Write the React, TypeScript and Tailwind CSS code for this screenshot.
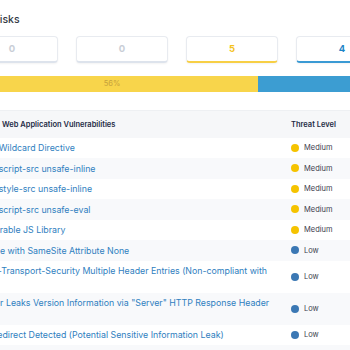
import type { ReactNode } from "react";

type Threat = "Medium" | "Low";

const alerts: { name: string; level: Threat }[] = [
  { name: "CSP: Wildcard Directive", level: "Medium" },
  { name: "CSP: script-src unsafe-inline", level: "Medium" },
  { name: "CSP: style-src unsafe-inline", level: "Medium" },
  { name: "CSP: script-src unsafe-eval", level: "Medium" },
  { name: "Vulnerable JS Library", level: "Medium" },
  { name: "Cookie with SameSite Attribute None", level: "Low" },
  { name: "Strict-Transport-Security Multiple Header Entries (Non-compliant with Spec)", level: "Low" },
  { name: 'Server Leaks Version Information via "Server" HTTP Response Header Field', level: "Low" },
  { name: "Big Redirect Detected (Potential Sensitive Information Leak)", level: "Low" },
  { name: "Information Disclosure - Suspicious Comments", level: "Low" },
];

const counts = [
  { value: 0, text: "text-[#c9ced6]", edge: "border-b-[#dde3ec]" },
  { value: 0, text: "text-[#c9ced6]", edge: "border-b-[#dde3ec]" },
  { value: 5, text: "text-[#f4c21c]", edge: "border-b-[#f7cf45]" },
  { value: 4, text: "text-[#1d84c6]", edge: "border-b-[#3a9ad4]" },
  { value: 0, text: "text-[#c9ced6]", edge: "border-b-[#dde3ec]" },
];

function CountCard({ value, text, edge }: { value: number; text: string; edge: string }) {
  return (
    <div className={`flex h-[27px] w-[92px] shrink-0 items-center justify-center rounded-[4px] border border-[#e8ebf0] border-b-2 bg-white pt-[1px] shadow-[0_1px_2px_rgba(0,0,0,0.05)] ${edge}`}>
      <span className={`text-[9.5px] font-bold ${text}`}>{value}</span>
    </div>
  );
}

function ThreatBadge({ level }: { level: Threat }) {
  return (
    <div className="flex items-center gap-[5px]">
      <span className={`h-[8px] w-[8px] shrink-0 rounded-full ${level === "Medium" ? "bg-[#f5c300]" : "bg-[#3b78b4]"}`} />
      <span className="text-[7.5px] text-[#3d3d4d]">{level}</span>
    </div>
  );
}

function Cell({ children, className = "" }: { children: ReactNode; className?: string }) {
  return <td className={`align-middle ${className}`}>{children}</td>;
}

export default function App() {
  return (
    <div className="h-[350px] w-[350px] overflow-hidden bg-white font-['Inter',sans-serif]">
      <div className="-ml-[34px] w-[560px]">
        <h2 className="ml-[27px] pt-[13px] text-[10.5px] font-medium leading-[14px] text-[#333a45]">Risks</h2>

        <div className="mt-[9px] flex gap-[18px]">
          {counts.map((c, i) => (
            <CountCard key={i} {...c} />
          ))}
        </div>

        <div className="mt-[13px] flex h-[16px] w-[520px]">
          <div className="flex w-[292px] items-center justify-center bg-[#f8d54b]">
            <span className="text-[7.5px] text-[#c6a23c]">56%</span>
          </div>
          <div className="flex-1 bg-[#3c9dd2]" />
        </div>

        <table className="mt-[18px] w-[530px] border-collapse">
          <thead>
            <tr className="h-[27px] border-t border-[#eef0f3] bg-[#f6f7f9]">
              <th className="w-[317px] pl-[36px] text-left text-[7.5px] font-semibold text-[#1d2b45]">Web Application Vulnerabilities</th>
              <th className="pl-[8px] text-left text-[7.5px] font-semibold text-[#1d2b45]">Threat Level</th>
            </tr>
          </thead>
          <tbody>
            {alerts.map((a, i) => (
              <tr key={a.name} className={i % 2 === 1 ? "bg-[#f8f9fb]" : "bg-white"}>
                <Cell className="py-[4.5px] pl-[10px] pr-[6px] text-[8.8px] leading-[11.5px] text-[#2f80c0]">{a.name}</Cell>
                <Cell className="pl-[8px]">
                  <ThreatBadge level={a.level} />
                </Cell>
              </tr>
            ))}
          </tbody>
        </table>
      </div>
    </div>
  );
}
